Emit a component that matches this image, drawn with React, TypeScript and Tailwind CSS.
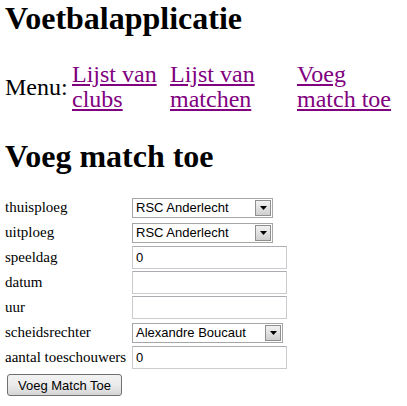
import React from 'react'

const serif = { fontFamily: '"Liberation Serif", "Times New Roman", serif' }

function FakeSelect({ value, width }: { value: string; width: string }) {
  return (
    <div className={`relative h-[20px] ${width} border border-[#a6a6a6] bg-white flex items-center pl-[3px] text-[13px] text-black font-['Liberation_Sans',Arial,sans-serif]`}>
      <span className="leading-none">{value}</span>
      <div className="absolute right-[1px] top-[1px] bottom-[1px] w-[16px] border border-[#8e8f8f] bg-gradient-to-b from-[#f2f2f2] to-[#cfcfcf] flex items-center justify-center">
        <svg width="7" height="4" viewBox="0 0 7 4">
          <path d="M0 0 H7 L3.5 4 Z" fill="#000" />
        </svg>
      </div>
    </div>
  )
}

function FakeInput({ value }: { value?: string }) {
  return (
    <div className="h-[23px] w-[155px] border border-[#c9cbcf] border-t-[#abadb3] bg-white flex items-center pl-[3px] text-[13px] text-black font-['Liberation_Sans',Arial,sans-serif]">
      {value}
    </div>
  )
}

const rows: { label: string; kind: 'select' | 'input' | 'ref'; value?: string }[] = [
  { label: 'thuisploeg', kind: 'select', value: 'RSC Anderlecht' },
  { label: 'uitploeg', kind: 'select', value: 'RSC Anderlecht' },
  { label: 'speeldag', kind: 'input', value: '0' },
  { label: 'datum', kind: 'input' },
  { label: 'uur', kind: 'input' },
  { label: 'scheidsrechter', kind: 'ref', value: 'Alexandre Boucaut' },
  { label: 'aantal toeschouwers', kind: 'input', value: '0' },
]

export default function App() {
  return (
    <div className="w-[407px] h-[406px] bg-white text-black pl-[5px] overflow-hidden" style={serif}>
      <h1 className="text-[32px] font-bold leading-[37px] m-0">Voetbalapplicatie</h1>

      <div className="mt-[25px] flex items-center text-[24px] leading-[25px]">
        <div className="w-[67px]">Menu:</div>
        <a href="#" className="w-[98px] text-[#800080] underline">Lijst van<br />clubs</a>
        <a href="#" className="w-[127px] text-[#800080] underline">Lijst van<br />matchen</a>
        <a href="#" className="w-[100px] text-[#800080] underline">Voeg<br />match toe</a>
      </div>

      <h1 className="mt-[26px] text-[32px] font-bold leading-[37px]">Voeg match toe</h1>

      <div className="mt-[20px] flex flex-col text-[15px]">
        {rows.map((r) => (
          <div key={r.label} className="h-[25px] flex items-center">
            <div className="w-[127px] whitespace-nowrap">{r.label}</div>
            {r.kind === 'select' && <FakeSelect value={r.value!} width="w-[141px]" />}
            {r.kind === 'ref' && <FakeSelect value={r.value!} width="w-[151px]" />}
            {r.kind === 'input' && <FakeInput value={r.value} />}
          </div>
        ))}
        <div className="h-[30px] flex items-center pl-[2px]">
          <button className="h-[22px] w-[115px] rounded-[3px] border border-[#707070] bg-gradient-to-b from-[#f2f2f2] via-[#ebebeb] to-[#d5d5d5] text-[13px] text-black font-['Liberation_Sans',Arial,sans-serif] leading-none">
            Voeg Match Toe
          </button>
        </div>
      </div>
    </div>
  )
}
